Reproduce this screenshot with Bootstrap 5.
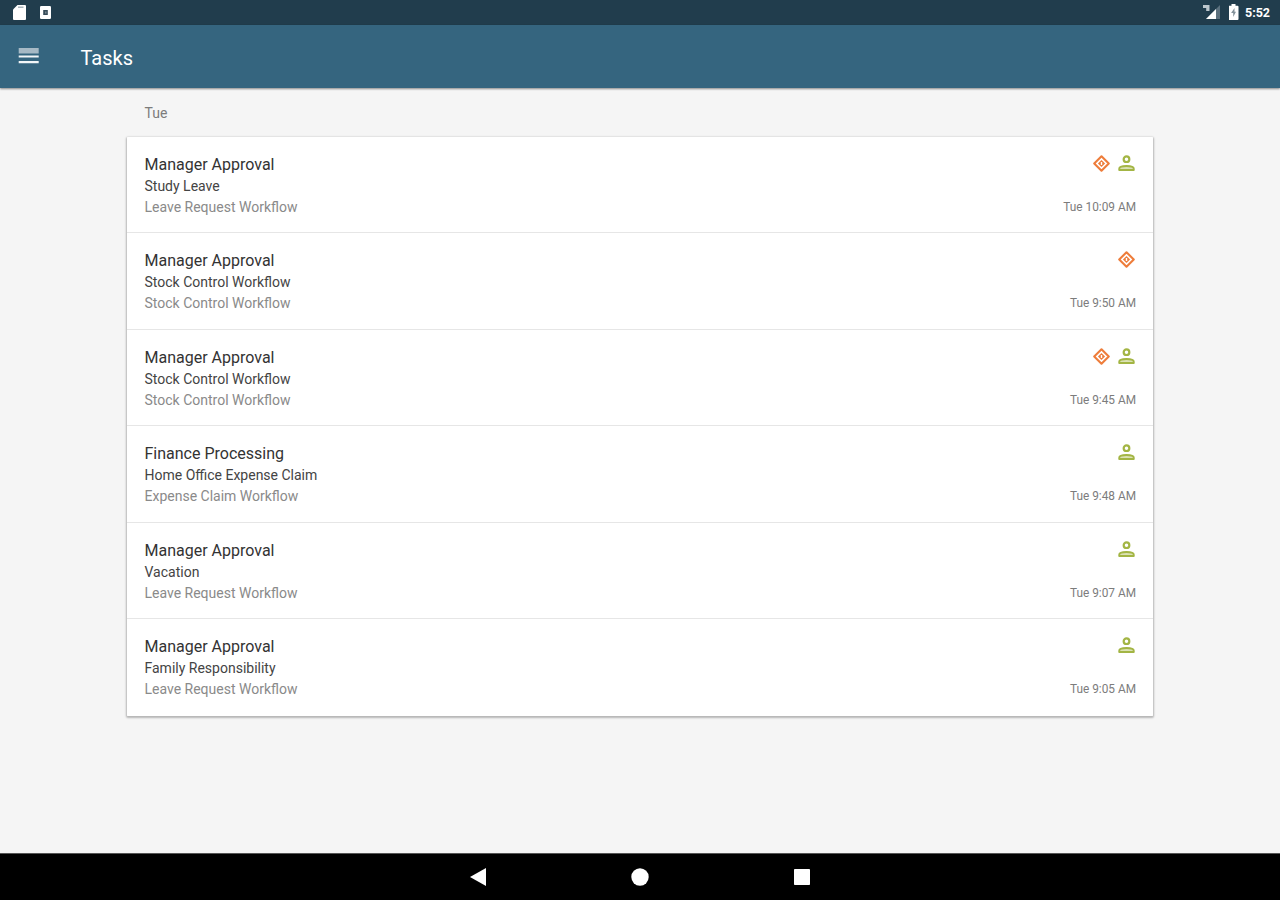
<!DOCTYPE html>
<html lang="en">
<head>
<meta charset="utf-8">
<meta name="viewport" content="width=device-width, initial-scale=1">
<title>Tasks</title>
<link href="https://cdn.jsdelivr.net/npm/bootstrap@5.3.0/dist/css/bootstrap.min.css" rel="stylesheet">
<style>
body{font-family:Roboto,"Liberation Sans",sans-serif;background:#f5f5f5;height:900px;overflow:hidden}
svg{display:block;flex:none}
.status-bar{height:24.5px;background:#213d4d;padding:0 7px 0 13px}
.sync-icon{margin-left:14px}
.battery-icon{margin-left:7px}
.home-icon{margin:0 145px}
.clock{font-size:12.5px;line-height:25px;width:28px;margin-left:6px;white-space:nowrap}
.app-bar{height:63.5px;background:#35657f;padding:0 18px;box-shadow:0 1px 2px rgba(0,0,0,.45);z-index:1}
.app-title{font-size:20px;line-height:24px;margin:3px 0 0 41.5px;font-weight:400}
.task-area{width:1026px}
.day-label{height:48.5px;padding:15px 0 0 17.5px;font-size:14px;line-height:21px;color:#7c7c7c}
.task-list{border-radius:1px;box-shadow:0 1px 2px 1px rgba(0,0,0,.26)}
.task-row{height:96.5px;padding:17px 17.5px 0 17.5px;border:0;border-bottom:1.5px solid #e6e6e6;background:#fff;border-radius:0}
.task-row:last-child{border-bottom:0}
.task-name{font-size:16px;line-height:22px;color:#333}
.task-subject{font-size:14px;line-height:21px;color:#444;margin-top:.4px}
.task-flow{font-size:14px;line-height:21px;color:#8a8a8a}
.task-time{font-size:11.85px;line-height:22px;color:#7c7c7c;margin-right:-.5px}
.task-side{padding-top:1px}
.task-icons{margin-right:1px}
.nav-bar{height:47px;background:#000;border-top:1px solid #555}
</style>
</head>
<body class="d-flex flex-column">
<svg width="0" height="0" class="position-absolute" aria-hidden="true">
<symbol id="priority" viewBox="0 0 18 18"><path d="M9 1.3 16.7 9 9 16.7 1.3 9Z" fill="none" stroke="#ee7d3b" stroke-width="2.2" stroke-linejoin="round"/><path d="M9 5.2 12.8 9 9 12.8 5.2 9Z" fill="#ee7d3b"/><path d="M9 7.4v3.2" stroke="#fff" stroke-width="1.5"/></symbol>
<symbol id="person" viewBox="0 0 18 18"><circle cx="9" cy="4.4" r="3" fill="none" stroke="#a3b544" stroke-width="2.3"/><path d="M1.3 15.9V14.5c0-2 4.3-2.9 7.7-2.9s7.7.9 7.7 2.9v1.4Z" fill="#dbe2b4" stroke="#a3b544" stroke-width="2" stroke-linejoin="round"/></symbol>
</svg>
<div class="status-bar d-flex align-items-center text-white flex-shrink-0">
<svg width="13" height="15" viewBox="0 0 13 15"><path d="M4.5 0H12q1 0 1 1v13q0 1-1 1H1q-1 0-1-1V4.5Z" fill="#fff"/><path d="M5 2.2h5.5" stroke="#9aa7af" stroke-width="1.3"/></svg>
<svg class="sync-icon" width="11" height="13" viewBox="0 0 11 13"><rect width="11" height="13" rx="1.2" fill="#fff"/><path d="M3.2 4h4.6v5H3.2Z" fill="#354b58"/><path d="M5 5.5h1.5v2H5Z" fill="#788790"/></svg>
<svg class="ms-auto" width="19" height="16" viewBox="0 0 19 16"><path d="M17 1v14H3Z" fill="#5c717e"/><path d="M13 5v10H3Z" fill="#fff"/><path d="M0 1h6.5v6H3.2V4H0Z" fill="#bcc6cc"/></svg>
<svg class="battery-icon" width="10" height="16" viewBox="0 0 10 16"><path d="M2.5 0h4v1.7h2q1 0 1 1V15q0 1-1 1H.5q-1 0-1-1V2.7q0-1 1-1h2Z" fill="#fff"/><path d="M5.5 4 2.1 9h2.1v4L7 7.8H5.5Z" fill="#84929b"/></svg>
<span class="clock fw-bold">5:52</span>
</div>
<header class="app-bar d-flex align-items-center text-white flex-shrink-0 position-relative">
<svg width="21" height="16" viewBox="0 0 21 16"><path d="M.7 0h20v5.5h-20Z" fill="#a6b9c5"/><path d="M.7 7.4h20v2.1h-20ZM.7 13h20v2.3h-20Z" fill="#f2f6f8"/></svg>
<h1 class="app-title">Tasks</h1>
</header>
<main class="task-area mx-auto flex-grow-1">
<div class="day-label">Tue</div>
<div class="task-list list-group">
<div class="task-row list-group-item d-flex justify-content-between"><div><div class="task-name">Manager Approval</div><div class="task-subject">Study Leave</div><div class="task-flow">Leave Request Workflow</div></div><div class="task-side d-flex flex-column align-items-end"><div class="task-icons d-flex gap-2 mb-4"><svg width="17" height="17"><use href="#priority"/></svg><svg width="17" height="17"><use href="#person"/></svg></div><div class="task-time">Tue 10:09 AM</div></div></div>
<div class="task-row list-group-item d-flex justify-content-between"><div><div class="task-name">Manager Approval</div><div class="task-subject">Stock Control Workflow</div><div class="task-flow">Stock Control Workflow</div></div><div class="task-side d-flex flex-column align-items-end"><div class="task-icons d-flex gap-2 mb-4"><svg width="17" height="17"><use href="#priority"/></svg></div><div class="task-time">Tue 9:50 AM</div></div></div>
<div class="task-row list-group-item d-flex justify-content-between"><div><div class="task-name">Manager Approval</div><div class="task-subject">Stock Control Workflow</div><div class="task-flow">Stock Control Workflow</div></div><div class="task-side d-flex flex-column align-items-end"><div class="task-icons d-flex gap-2 mb-4"><svg width="17" height="17"><use href="#priority"/></svg><svg width="17" height="17"><use href="#person"/></svg></div><div class="task-time">Tue 9:45 AM</div></div></div>
<div class="task-row list-group-item d-flex justify-content-between"><div><div class="task-name">Finance Processing</div><div class="task-subject">Home Office Expense Claim</div><div class="task-flow">Expense Claim Workflow</div></div><div class="task-side d-flex flex-column align-items-end"><div class="task-icons d-flex gap-2 mb-4"><svg width="17" height="17"><use href="#person"/></svg></div><div class="task-time">Tue 9:48 AM</div></div></div>
<div class="task-row list-group-item d-flex justify-content-between"><div><div class="task-name">Manager Approval</div><div class="task-subject">Vacation</div><div class="task-flow">Leave Request Workflow</div></div><div class="task-side d-flex flex-column align-items-end"><div class="task-icons d-flex gap-2 mb-4"><svg width="17" height="17"><use href="#person"/></svg></div><div class="task-time">Tue 9:07 AM</div></div></div>
<div class="task-row list-group-item d-flex justify-content-between"><div><div class="task-name">Manager Approval</div><div class="task-subject">Family Responsibility</div><div class="task-flow">Leave Request Workflow</div></div><div class="task-side d-flex flex-column align-items-end"><div class="task-icons d-flex gap-2 mb-4"><svg width="17" height="17"><use href="#person"/></svg></div><div class="task-time">Tue 9:05 AM</div></div></div>
</div>
</main>
<footer class="nav-bar d-flex justify-content-center align-items-center flex-shrink-0">
<svg width="16" height="18" viewBox="0 0 16 18"><path d="M16 0v18L0 9Z" fill="#fff"/></svg>
<svg class="home-icon" width="18" height="18" viewBox="0 0 18 18"><circle cx="9" cy="9" r="8.7" fill="#fff"/></svg>
<svg width="16" height="16" viewBox="0 0 16 16"><rect width="16" height="16" rx=".8" fill="#fff"/></svg>
</footer>
<script src="https://cdn.jsdelivr.net/npm/bootstrap@5.3.0/dist/js/bootstrap.bundle.min.js"></script>
</body>
</html>
